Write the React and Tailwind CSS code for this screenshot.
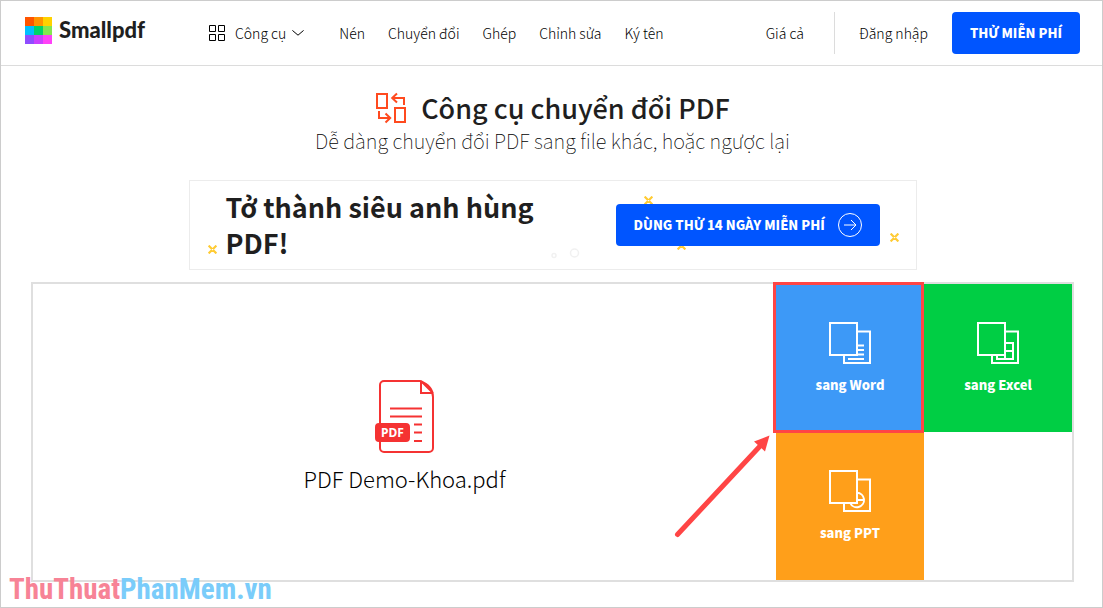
import { useState } from 'react'

const logoColors = [
  '#ff5500', '#ff9400', '#ffd200',
  '#00bfff', '#00d26a', '#85e650',
  '#8f4cff', '#c93fff', '#ff42f7',
]

const links = ['Nén', 'Chuyển đổi', 'Ghép', 'Chỉnh sửa', 'Ký tên']

const Logo = () => (
  <a href="#" className="flex items-center gap-[7px]">
    <svg width="27" height="27" viewBox="0 0 27 27" shapeRendering="crispEdges" aria-hidden="true">
      {logoColors.map((color, i) => (
        <rect key={color} x={(i % 3) * 9} y={Math.floor(i / 3) * 9} width="9" height="9" fill={color} />
      ))}
    </svg>
    <span className="font-['Lato'] text-[22px] leading-6 font-black">Smallpdf</span>
  </a>
)

const Spark = ({ className }) => (
  <svg className={'absolute ' + className} width="9" height="9" viewBox="0 0 9 9" stroke="#ffcb33" strokeWidth="2.2" aria-hidden="true">
    <path d="M.6.6L4 4M8.400.6L5 4M.6 8.400L4 5M8.400 8.400L5 5" />
  </svg>
)

const Pages = ({ children }) => (
  <svg width="42" height="42" viewBox="0 0 42 42" fill="none" stroke="#fff" strokeWidth="2" aria-hidden="true">
    <path d="M1 1h27v32H1z" />
    <path d="M28 9.5h13V41H15v-8" />
    {children}
  </svg>
)

const WordIcon = () => (
  <Pages>
    <path d="M29 23.5h6M29 28h6M29 32.5h6M19 37h16" />
  </Pages>
)

const ExcelIcon = () => (
  <Pages>
    <path d="M28 21h8v16H20v-4M28 29h8M28 33v4" />
  </Pages>
)

const PptIcon = () => (
  <Pages>
    <path d="M28 22.8a7.2 7.2 0 1 1-6.8 10M28 30h7.5M28 22.8v7.2" />
  </Pages>
)

const Tile = ({ label, icon, color, children }) => (
  <div className="relative h-[148px]">
    <button className={'flex h-full w-full flex-col items-center justify-center gap-[11px] pt-px text-[13px] leading-5 font-black text-white ' + color}>
      {icon}
      {label}
    </button>
    {children}
  </div>
)

export default function App() {
  const [open, setOpen] = useState(false)

  return (
    <div className="relative min-h-screen border border-[#ccc] bg-white font-['Noto_Sans_CJK_SC','Noto_Sans',sans-serif] text-[#1f1f1f]">
      <header className="flex h-[65px] items-center border-b border-[#dcdcdc] pr-[22px] pl-6">
        <div className="pb-1.5">
          <Logo />
        </div>
        <nav className="ml-16 flex items-center gap-[23px] pb-px text-[14px] leading-5 font-light text-black">
          <button className="mr-3 flex items-center gap-2.5" aria-expanded={open} onClick={() => setOpen(!open)}>
            <svg width="16" height="16" viewBox="0 0 16 16" fill="none" stroke="currentColor" aria-hidden="true">
              <path d="M.5.5h6v6h-6zM9.5.5h6v6h-6zM.5 9.5h6v6h-6zM9.5 9.5h6v6h-6z" />
            </svg>
            <span className="flex items-center gap-1.5">
              Công cụ
              <svg width="12" height="6" viewBox="0 0 12 6" fill="none" stroke="currentColor" aria-hidden="true">
                <path d="M.4.4L6 5.2 11.6.4" />
              </svg>
            </span>
          </button>
          {links.map((link) => (
            <a key={link} href="#">{link}</a>
          ))}
        </nav>
        <div className="ml-auto flex items-center text-[14px] leading-5 font-light text-black">
          <a href="#">Giá cả</a>
          <span className="mr-6 ml-[30px] h-[42px] w-px bg-[#dcdcdc]" />
          <a href="#">Đăng nhập</a>
          <button className="ml-6 h-[42px] w-32 rounded bg-[#0055ff] text-[13px] font-black text-white">THỬ MIỄN PHÍ</button>
        </div>
      </header>

      <main className="pt-6 pr-7 pl-[30px]">
        <div className="flex items-center justify-center gap-3.5">
          <svg width="32" height="32" viewBox="0 0 32 32" fill="none" stroke="#ff4a1f" strokeWidth="2" aria-hidden="true">
            <path d="M2 2h10v14H2zM20 16h10v14H20z" />
            <path d="M29 13V6H18M22 1.5L17.2 6 22 10.5" />
            <path d="M4 19v7h11M10.500 21.500L15.200 26l-4.700 4.500" />
          </svg>
          <h1 className="text-[27px] leading-9 font-medium">Công cụ chuyển đổi PDF</h1>
        </div>
        <p className="text-center text-[20px] leading-[30px] font-thin text-black">Dễ dàng chuyển đổi PDF sang file khác, hoặc ngược lại</p>

        <section className="relative mx-auto mt-6 flex h-[90px] max-w-[728px] items-center justify-between border border-[#ececec] pr-9 pl-9">
          <h2 className="w-[330px] text-[27px] leading-9 font-bold">Tở thành siêu anh hùng PDF!</h2>
          <Spark className="top-16 left-[18px]" />
          <Spark className="top-[15px] left-[454px]" />
          <Spark className="top-[60px] left-[487px]" />
          <Spark className="top-[52px] right-[17px]" />
          <svg className="absolute bottom-2 left-[360px]" width="32" height="14" viewBox="0 0 32 14" fill="none" stroke="#f1f1f1" aria-hidden="true">
            <circle cx="4" cy="8.500" r="2" strokeWidth="1.500" />
            <circle cx="24.500" cy="6" r="4" strokeWidth="1.500" />
          </svg>
          <button className="relative flex h-[42px] w-[264px] items-center justify-between rounded bg-[#0055ff] px-[18px] text-[13px] leading-5 font-black text-white">
            DÙNG THỬ 14 NGÀY MIỄN PHÍ
            <svg width="24" height="24" viewBox="0 0 24 24" fill="none" stroke="#fff" aria-hidden="true">
              <circle cx="12" cy="12" r="11.500" />
              <path d="M6 12h12M13 7l5 5-5 5" />
            </svg>
          </button>
        </section>

        <section className="mt-3 flex border-2 border-[#dfdfdf]">
          <div className="flex flex-1 flex-col items-center justify-center gap-2 pt-2.5 text-black">
            <svg width="60" height="74" viewBox="0 0 60 74" fill="none" stroke="#f53232" strokeWidth="2" aria-hidden="true">
              <path d="M5 44V5a4 4 0 0 1 4-4h36q13 5 13 16v51a4 4 0 0 1-4 4H9a4 4 0 0 1-4-4v-8" />
              <path d="M46 1v12h12M46 1l12 12" />
              <path d="M15 28.500h32M15 36.500h32M39 44.500h8M39 52.500h8M39 61h8" />
              <rect x="1" y="44" width="33" height="17" rx="3" fill="#f53232" />
              <text x="17.500" y="57" fill="#fff" stroke="none" textAnchor="middle" className="font-['Noto_Sans'] text-[12px] font-bold">PDF</text>
            </svg>
            <p className="text-[22px] leading-8 font-light">PDF Demo-Khoa.pdf</p>
          </div>
          <div className="grid w-[296px] grid-cols-2">
            <Tile label="sang Word" icon={<WordIcon />} color="bg-[#3d99f7]">
              <div className="pointer-events-none absolute -top-0.5 right-0 -bottom-px -left-[3px] z-10 border-3 border-[#ff4545]" />
              <svg className="absolute top-full right-full" width="104" height="108" viewBox="0 0 104 108" aria-hidden="true">
                <path d="M5.500 102.500L90 12" stroke="#ff4545" strokeWidth="5" strokeLinecap="round" />
                <path d="M97.500 3.500L93 19.500 82 9.500z" fill="#ff4545" />
              </svg>
            </Tile>
            <Tile label="sang Excel" icon={<ExcelIcon />} color="bg-[#00ce44]" />
            <Tile label="sang PPT" icon={<PptIcon />} color="bg-[#ff9f1a]" />
          </div>
        </section>
      </main>

      <div className="absolute bottom-0 left-2 font-['Liberation_Sans_Narrow','Roboto_Condensed','DejaVu_Sans_Condensed',sans-serif] text-[29px] leading-9 font-bold">
        <span className="text-[#f78396]">ThuThuat</span>
        <span className="text-[#7accfa]">PhanMem.vn</span>
      </div>
    </div>
  )
}
